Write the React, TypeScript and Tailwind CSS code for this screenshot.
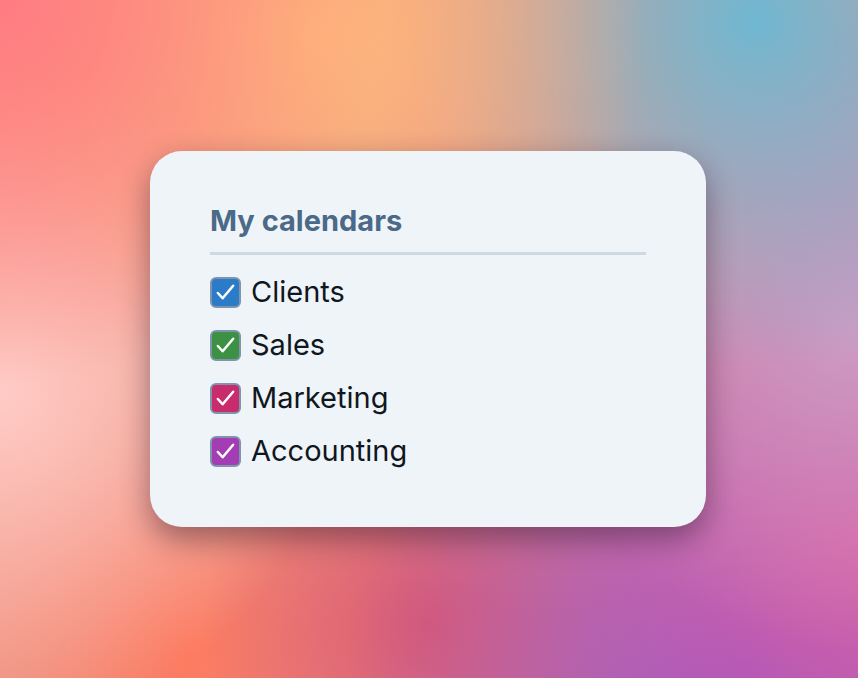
const calendars = [
  { name: "Clients", color: "bg-[#2b7bc8]" },
  { name: "Sales", color: "bg-[#3c9142]" },
  { name: "Marketing", color: "bg-[#c92c6d]" },
  { name: "Accounting", color: "bg-[#a43cb4]" },
];

function Check({ color }: { color: string }) {
  return (
    <span
      className={`flex h-[31px] w-[31px] shrink-0 items-center justify-center rounded-[6px] border-2 border-[#7e95ad] ${color}`}
    >
      <svg width="23" height="23" viewBox="0 0 24 24" fill="none" aria-hidden>
        <path
          d="M4 12.5l5 5.5L20 5"
          stroke="white"
          strokeWidth="2.6"
          strokeLinecap="round"
          strokeLinejoin="round"
        />
      </svg>
    </span>
  );
}

export default function App() {
  return (
    <div className="flex h-[678px] w-full items-center justify-center pr-[2px] bg-[radial-gradient(circle_at_0%_0%,#ff7c82_0%,transparent_35%),radial-gradient(circle_at_36%_5%,#feb97a_0%,transparent_40%),radial-gradient(circle_at_88%_3%,#6fb7d1_0%,transparent_35%),radial-gradient(circle_at_0%_58%,#ffcbc6_0%,transparent_35%),radial-gradient(circle_at_100%_48%,#cc9cc4_0%,transparent_35%),radial-gradient(circle_at_100%_78%,#d95fa4_0%,transparent_30%),radial-gradient(circle_at_88%_100%,#9f55c2_0%,transparent_40%),radial-gradient(circle_at_50%_92%,#db5970_0%,transparent_30%),radial-gradient(circle_at_22%_96%,#fd7a5e_0%,transparent_30%),linear-gradient(135deg,#ff9b7e_0%,#e59a8f_50%,#c06aa8_100%)] font-['Inter',sans-serif]">
      <div className="flex h-[376px] w-[556px] flex-col rounded-[32px] bg-[#eff4f9] px-[60px] pt-[52px] shadow-[0_12px_30px_rgba(40,20,40,0.45)]">
        <h2 className="text-[29px] font-bold leading-[36px] text-[#4b6a88]">
          My calendars
        </h2>
        <div className="mt-[13px] h-[3px] w-full bg-[#cfd9e3]" />
        <ul className="mt-[16px] flex flex-col gap-[11px]">
          {calendars.map((c) => (
            <li key={c.name} className="flex h-[42px] items-center gap-[10px]">
              <Check color={c.color} />
              <span className="text-[29px] leading-[42px] text-[#0f1720]">
                {c.name}
              </span>
            </li>
          ))}
        </ul>
      </div>
    </div>
  );
}
